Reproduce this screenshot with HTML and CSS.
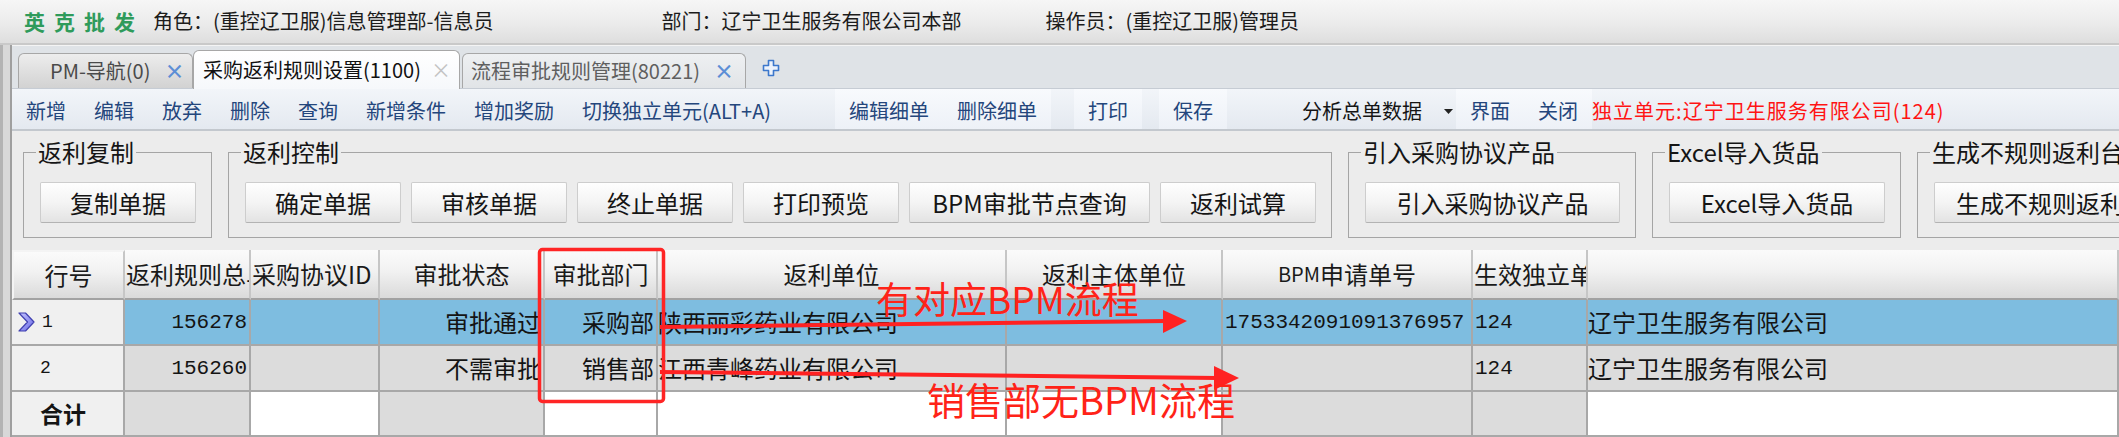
FILE: index.html
```html
<!DOCTYPE html>
<html lang="zh-CN">
<head>
<meta charset="utf-8">
<title>采购返利规则设置</title>
<link rel="stylesheet" href="styles.css">
</head>
<body>
<header class="titlebar">
  <span class="brand">英克批发</span>
  <span class="info role">角色：(重控辽卫服)信息管理部-信息员</span>
  <span class="info dept">部门：辽宁卫生服务有限公司本部</span>
  <span class="info oper">操作员：(重控辽卫服)管理员</span>
</header>
<div class="frame">
  <div class="frame-edge"></div>
  <main class="frame-body">
    <nav class="tabbar">
      <div class="tab tab-nav"><span class="tab-label">PM-导航(0)</span><span class="tab-close">×</span></div>
      <div class="tab tab-active"><span class="tab-label">采购返利规则设置(1100)</span><span class="tab-close">×</span></div>
      <div class="tab tab-flow"><span class="tab-label">流程审批规则管理(80221)</span><span class="tab-close">×</span></div>
      <span class="tab-add"><svg width="18" height="18" viewBox="0 0 18 18"><path d="M6.5 1.5h5v5h5v5h-5v5h-5v-5h-5v-5h5z" fill="#edf3fc" stroke="#3d78cc" stroke-width="1.6" stroke-linejoin="round"/></svg></span>
    </nav>
    <div class="toolbar">
      <span class="tb-item">新增</span>
      <span class="tb-item">编辑</span>
      <span class="tb-item">放弃</span>
      <span class="tb-item">删除</span>
      <span class="tb-item">查询</span>
      <span class="tb-item">新增条件</span>
      <span class="tb-item">增加奖励</span>
      <span class="tb-item">切换独立单元(ALT+A)</span>
      <span class="tb-panel tb-panel-detail"><span class="tb-item">编辑细单</span><span class="tb-item">删除细单</span></span>
      <span class="tb-panel tb-panel-print"><span class="tb-item">打印</span></span>
      <span class="tb-panel tb-panel-save"><span class="tb-item">保存</span></span>
      <span class="tb-item tb-analysis">分析总单数据<svg class="tb-caret" width="9" height="5" viewBox="0 0 9 5"><path d="M0 0h9L4.5 5z" fill="#222"/></svg></span>
      <span class="tb-panel tb-panel-view"><span class="tb-item">界面</span><span class="tb-item">关闭</span></span>
      <span class="tb-unit">独立单元:辽宁卫生服务有限公司(124)</span>
    </div>
    <section class="groups">
      <fieldset class="grp">
        <legend>返利复制</legend>
        <div class="grp-btns"><button class="btn btn-std">复制单据</button></div>
      </fieldset>
      <fieldset class="grp">
        <legend>返利控制</legend>
        <div class="grp-btns">
          <button class="btn btn-std">确定单据</button>
          <button class="btn btn-std">审核单据</button>
          <button class="btn btn-std">终止单据</button>
          <button class="btn btn-std">打印预览</button>
          <button class="btn btn-bpm">BPM审批节点查询</button>
          <button class="btn btn-std">返利试算</button>
        </div>
      </fieldset>
      <fieldset class="grp">
        <legend>引入采购协议产品</legend>
        <div class="grp-btns"><button class="btn btn-intro">引入采购协议产品</button></div>
      </fieldset>
      <fieldset class="grp">
        <legend>Excel导入货品</legend>
        <div class="grp-btns"><button class="btn btn-excel">Excel导入货品</button></div>
      </fieldset>
      <fieldset class="grp">
        <legend>生成不规则返利台账</legend>
        <div class="grp-btns"><button class="btn btn-gen">生成不规则返利台账</button></div>
      </fieldset>
    </section>
    <div class="grid">
      <div class="gh gh-rowhead">行号</div>
      <div class="gh gh-left">返利规则总单ID</div>
      <div class="gh gh-left">采购协议ID</div>
      <div class="gh">审批状态</div>
      <div class="gh">审批部门</div>
      <div class="gh">返利单位</div>
      <div class="gh">返利主体单位</div>
      <div class="gh"><span class="hd-latin">BPM</span>申请单号</div>
      <div class="gh gh-left">生效独立单元</div>
      <div class="gh"></div>

      <div class="gc gc-row"><svg class="row-mark" width="17" height="20" viewBox="0 0 17 20"><defs><linearGradient id="rm" x1="0" y1="0" x2="1" y2="1"><stop offset="0" stop-color="#c4c4ff"/><stop offset="1" stop-color="#6a6ae6"/></linearGradient></defs><path d="M1 1h6.5l8.5 9-8.5 9H1l8.5-9z" fill="url(#rm)" stroke="#3f3fb0" stroke-width="1.2" stroke-linejoin="round"/></svg><span class="rownum">1</span></div>
      <div class="gc sel right num">156278</div>
      <div class="gc sel"></div>
      <div class="gc sel right">审批通过</div>
      <div class="gc sel right">采购部</div>
      <div class="gc sel flush">陕西丽彩药业有限公司</div>
      <div class="gc sel"></div>
      <div class="gc sel num">1753342091091376957</div>
      <div class="gc sel num">124</div>
      <div class="gc sel flush">辽宁卫生服务有限公司</div>

      <div class="gc gc-row"><span class="rownum rownum-plain">2</span></div>
      <div class="gc dim right num">156260</div>
      <div class="gc dim"></div>
      <div class="gc dim right">不需审批</div>
      <div class="gc dim right">销售部</div>
      <div class="gc dim flush">江西青峰药业有限公司</div>
      <div class="gc dim"></div>
      <div class="gc dim"></div>
      <div class="gc dim num">124</div>
      <div class="gc dim flush">辽宁卫生服务有限公司</div>

      <div class="gc gc-row total">合计</div>
      <div class="gc dim"></div>
      <div class="gc blank"></div>
      <div class="gc dim"></div>
      <div class="gc blank"></div>
      <div class="gc blank"></div>
      <div class="gc blank"></div>
      <div class="gc dim"></div>
      <div class="gc dim"></div>
      <div class="gc blank"></div>
    </div>
  </main>
</div>
<svg class="overlay" viewBox="0 0 2119 437" width="2119" height="437">
  <rect x="539.5" y="249.5" width="124" height="152" rx="3" fill="none" stroke="#ff2525" stroke-width="3.5"/>
  <line x1="660" y1="327" x2="1168" y2="321" stroke="#ff2222" stroke-width="4"/>
  <polygon points="1163,310 1187,321 1163,333" fill="#ff2222"/>
  <line x1="660" y1="372" x2="1218" y2="378" stroke="#ff2222" stroke-width="4"/>
  <polygon points="1214,366 1239,378 1214,390" fill="#ff2222"/>
</svg>
<div class="note note-yes">有对应BPM流程</div>
<div class="note note-no">销售部无BPM流程</div>
</body>
</html>
```

FILE: styles.css
```css
* { box-sizing: border-box; }
html, body { margin: 0; padding: 0; }
body {
  position: relative;
  width: 2119px;
  height: 437px;
  overflow: hidden;
  background: #ececec;
  font-family: "Noto Sans CJK SC", "Noto Sans", sans-serif;
  color: #151515;
}

/* title bar */
.titlebar {
  height: 45px;
  display: flex;
  align-items: center;
  padding: 0 0 1px 24px;
  background: linear-gradient(#f6f6f6, #ebebeb 55%, #dedede);
  border-bottom: 2px solid #c9c9c9;
  white-space: nowrap;
  line-height: 1;
}
.brand { font-size: 21px; font-weight: 700; color: #2f9b5b; letter-spacing: 9px; }
.info { font-size: 20px; color: #1c1c1c; }
.role { margin-left: 9px; }
.dept { margin-left: 168px; }
.oper { margin-left: 84px; }

/* frame */
.frame { display: flex; height: 392px; }
.frame-edge {
  flex: none;
  width: 12px;
  background: #d8d8d8;
  border-left: 3px solid #b3b3b3;
  border-right: 2px solid #9f9f9f;
}
.frame-body { flex: 1; min-width: 0; display: flex; flex-direction: column; overflow: hidden; }

/* tabs */
.tabbar {
  flex: none;
  height: 43px;
  display: flex;
  align-items: flex-end;
  padding-left: 6px;
  background: #dfe3e7;
  border-top: 1px solid #f4f4f4;
}
.tab {
  display: flex;
  align-items: center;
  height: 35px;
  border: 1px solid #a7a7a7;
  border-bottom: none;
  border-radius: 6px 6px 0 0;
  font-size: 20px;
  line-height: 1;
  white-space: nowrap;
}
.tab-nav { width: 175px; padding-left: 31px; background: linear-gradient(#ededed, #d2d2d2); color: #4a4a4a; }
.tab-active {
  position: relative;
  z-index: 1;
  width: 267px;
  height: 39px;
  margin-bottom: -1px;
  padding-left: 9px;
  background: linear-gradient(#ffffff, #f6f8fb);
  color: #111;
}
.tab-flow { width: 284px; margin-left: 2px; padding-left: 8px; background: linear-gradient(#eef0f2, #e1e4e7); color: #5f5f5f; }
.tab-close { margin-left: 14px; font-weight: 700; color: #5c8ed6; }
.tab-active .tab-close { margin-left: 10px; font-weight: 400; color: #c3c3c3; }
.tab-add { align-self: center; display: flex; margin: 2px 0 0 16px; }

/* toolbar */
.toolbar {
  flex: none;
  height: 43px;
  display: flex;
  align-items: stretch;
  background: linear-gradient(#f2f5f9, #e4e9f0);
  border-top: 1px solid #c6ccd4;
  border-bottom: 2px solid #c3c8ce;
  font-size: 20px;
  line-height: 1;
  color: #24467c;
  white-space: nowrap;
}
.tb-item { display: flex; align-items: center; padding: 4px 14px 0; }
.tb-panel { display: flex; background: linear-gradient(#f8fafd, #edf1f7); }
.tb-panel-detail { margin-left: 50px; }
.tb-panel-print { margin-left: 23px; }
.tb-panel-save { margin-left: 17px; }
.tb-analysis { margin-left: 61px; padding-right: 3px; color: #151515; }
.tb-caret { margin-left: 22px; }
.tb-unit { display: flex; align-items: center; padding-top: 4px; color: #ff1414; letter-spacing: 1px; }

/* group boxes */
.groups {
  flex: none;
  height: 119px;
  display: flex;
  align-items: flex-start;
  gap: 16px;
  padding: 9px 0 0 11px;
  background: #ececec;
  overflow: hidden;
}
.grp {
  flex: none;
  min-width: 0;
  margin: 0;
  padding: 18px 15px 14px 16px;
  border: 1px solid #a5a5a5;
}
.grp legend { margin-left: -4px; padding: 0 2px; font-size: 24px; line-height: 24px; color: #151515; }
.grp-btns { display: flex; gap: 10px; }
.btn {
  height: 41px;
  padding: 0;
  border: 1px solid #cdcdcd;
  border-bottom-color: #b3b3b3;
  border-radius: 2px;
  background: linear-gradient(#fefefe, #f4f4f4 50%, #e3e3e3);
  font-family: inherit;
  font-size: 24px;
  line-height: 1;
  color: #151515;
  white-space: nowrap;
}
.btn-std { width: 156px; }
.btn-bpm { width: 241px; }
.btn-intro { width: 255px; }
.btn-excel { width: 216px; }
.btn-gen { width: 260px; }

/* grid */
.grid {
  flex: none;
  display: grid;
  grid-template-columns: 113px 126px 129px 165px 113px 349px 216px 250px 115px 1fr;
  grid-template-rows: 50px 46px 46px 45px;
  background: #fff;
}
.gh, .gc {
  display: flex;
  align-items: center;
  min-width: 0;
  overflow: hidden;
  white-space: nowrap;
  padding: 0 2px;
  font-size: 24px;
  line-height: 1;
  border-right: 2px solid #a8a8a8;
  border-bottom: 2px solid #a8a8a8;
}
.gh {
  justify-content: center;
  background: linear-gradient(#fbfbfb, #f1f1f1 45%, #dadada);
  border-right-color: #c6c6c6;
  border-bottom-color: #a2a2a2;
  color: #1a1a1a;
}
.gh-left { justify-content: flex-start; padding-left: 1px; }
.gh-rowhead { border-left: 2px solid #f4f4f4; border-top: 2px solid #f4f4f4; }
.hd-latin { font-size: 20px; }
.gc { color: #141414; }
.gc-row { background: #f0f0f0; padding-left: 6px; }
.sel { background: #7ebde0; }
.dim { background: #dcdcdc; }
.blank { background: #fff; }
.right { justify-content: flex-end; }
.flush { padding-left: 0; }
.num { font-family: "Liberation Mono", monospace; font-size: 21px; }
.row-mark { flex: none; }
.rownum { margin-left: 7px; font-family: "Liberation Mono", monospace; font-size: 18px; }
.rownum-plain { margin-left: 22px; }
.total { padding-left: 28px; font-size: 23px; font-weight: 700; }

/* annotations */
.overlay { position: absolute; left: 0; top: 0; pointer-events: none; }
.note {
  position: absolute;
  font-family: "Noto Sans CJK SC", sans-serif;
  color: #ff2318;
  line-height: 1;
  white-space: nowrap;
}
.note-yes { left: 876px; top: 280px; font-size: 37px; }
.note-no { left: 927px; top: 380px; font-size: 38px; }
```
